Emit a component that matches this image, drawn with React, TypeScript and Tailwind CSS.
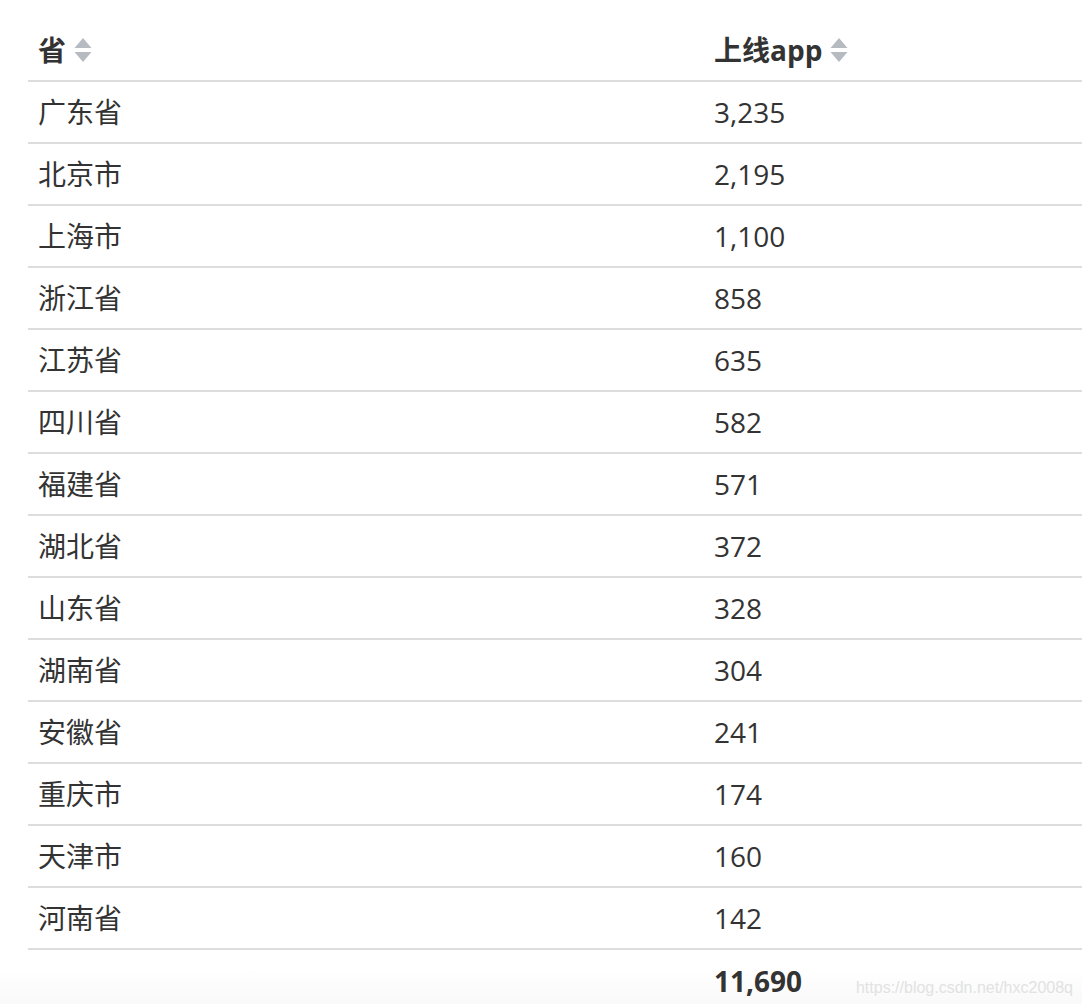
import React from "react";

const rows: [string, string][] = [
  ["广东省", "3,235"],
  ["北京市", "2,195"],
  ["上海市", "1,100"],
  ["浙江省", "858"],
  ["江苏省", "635"],
  ["四川省", "582"],
  ["福建省", "571"],
  ["湖北省", "372"],
  ["山东省", "328"],
  ["湖南省", "304"],
  ["安徽省", "241"],
  ["重庆市", "174"],
  ["天津市", "160"],
  ["河南省", "142"],
];

function SortIcon() {
  return (
    <svg width="18" height="25" viewBox="0 0 18 25" className="ml-[8px] shrink-0">
      <polygon points="9,0 17.5,10 0.5,10" fill="#b6bac1" />
      <polygon points="0.5,14 17.5,14 9,24" fill="#b6bac1" />
    </svg>
  );
}

export default function App() {
  return (
    <div
      className="relative w-[1082px] h-[1004px] overflow-hidden bg-white text-[#333333]"
      style={{ fontFamily: '"Open Sans", "Noto Sans CJK SC", sans-serif' }}
    >
      <div className="absolute left-0 right-0 bottom-0 h-[34px] bg-gradient-to-b from-white to-[#f9f9f9]" />
      <div className="relative pt-[20px] pl-[28px]">
        <div className="w-[1054px] text-[28px]">
          <div className="flex h-[62px] border-b-2 border-[#dddddd] items-center font-bold">
            <div className="w-[676px] pl-[10px] flex items-center">
              <span>省</span>
              <SortIcon />
            </div>
            <div className="flex-1 pl-[10px] flex items-center">
              <span>上线app</span>
              <SortIcon />
            </div>
          </div>
          {rows.map(([p, n]) => (
            <div key={p} className="flex h-[62px] border-b-2 border-[#dddddd] items-center">
              <div className="w-[676px] pl-[10px]">{p}</div>
              <div className="flex-1 pl-[10px]">{n}</div>
            </div>
          ))}
          <div className="flex h-[62px] items-center font-bold">
            <div className="w-[676px] pl-[10px]"></div>
            <div className="flex-1 pl-[10px]">11,690</div>
          </div>
        </div>
      </div>
      <div
        className="absolute right-[9px] top-[976px] text-[16px] text-[#e2e2e2]"
        style={{ fontFamily: '"Liberation Sans", Arial, sans-serif' }}
      >
        https://blog.csdn.net/hxc2008q
      </div>
    </div>
  );
}
